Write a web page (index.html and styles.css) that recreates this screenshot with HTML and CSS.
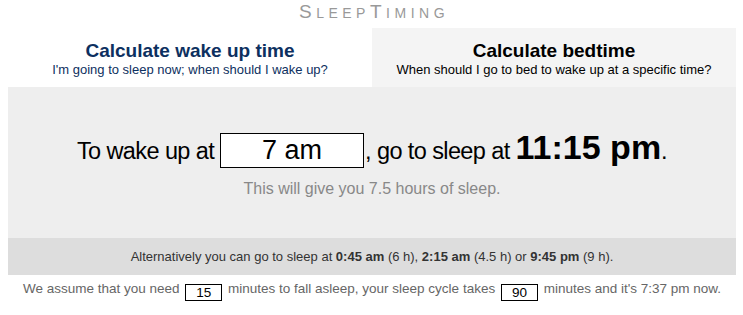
FILE: index.html
```
<!DOCTYPE html>
<html>
<head>
<meta charset="utf-8">
<link rel="stylesheet" href="styles.css">
</head>
<body>
<div class="page">
  <h1 class="logo"><span class="big">S</span>LEEP<span class="big">T</span>IMING</h1>
  <div class="tabs">
    <div class="tab active">
      <div class="tab-title">Calculate wake up time</div>
      <div class="tab-sub">I'm going to sleep now; when should I wake up?</div>
    </div>
    <div class="tab">
      <div class="tab-title">Calculate bedtime</div>
      <div class="tab-sub">When should I go to bed to wake up at a specific time?</div>
    </div>
  </div>
  <div class="panel">
    <div class="sentence">To wake up at <span class="time-input">7 am</span>, go to sleep at <span class="result">11:15 pm</span>.</div>
    <div class="note">This will give you 7.5 hours of sleep.</div>
  </div>
  <div class="alt">Alternatively you can go to sleep at <b>0:45 am</b> (6 h), <b>2:15 am</b> (4.5 h) or <b>9:45 pm</b> (9 h).</div>
  <div class="assume">We assume that you need <span class="small-input">15</span> minutes to fall asleep, your sleep cycle takes <span class="small-input">90</span> minutes and it's 7:37 pm now.</div>
</div>
</body>
</html>
```
FILE: styles.css
```
html, body { margin: 0; padding: 0; background: #fff; }
body { padding: 0 8px; font-family: "Liberation Sans", Arial, sans-serif; color: #000; }
.page { width: 728px; }
.logo {
  margin: 0;
  height: 28px;
  padding-top: 2px;
  padding-left: 4px;
  box-sizing: border-box;
  text-align: center;
  font-weight: normal;
  font-size: 14px;
  letter-spacing: 4.5px;
  color: #999;
  line-height: 20px;
}
.logo .big { font-size: 19px; }
.tabs { display: flex; height: 59px; }
.tab { flex: 1; text-align: center; background: #f4f4f4; padding-top: 11px; box-sizing: border-box; }
.tab.active { background: #fff; }
.tab-title { font-size: 19px; font-weight: bold; line-height: 23px; }
.tab-sub { font-size: 13px; line-height: 15px; }
.tab.active .tab-title, .tab.active .tab-sub { color: #0d3060; }
.panel { background: #eee; height: 151px; box-sizing: border-box; padding-top: 45px; text-align: center; }
.sentence { font-size: 23.5px; letter-spacing: -0.6px; line-height: 30px; }
.time-input {
  display: inline-block;
  width: 144px;
  height: 35px;
  box-sizing: border-box;
  padding-top: 1px;
  border: 1px solid #000;
  background: #fff;
  font-size: 27px;
  letter-spacing: 0;
  line-height: 31px;
  text-align: center;
  margin: 0 1px 0 0;
}
.result { font-size: 34px; font-weight: bold; letter-spacing: 0; }
.note { font-size: 16px; color: #888; margin-top: 12px; }
.alt { background: #ddd; height: 37px; line-height: 37px; text-align: center; font-size: 13px; color: #333; }
.assume { text-align: center; font-size: 13.5px; color: #666; padding-top: 4px; line-height: 20px; }
.small-input {
  display: inline-block;
  width: 37px;
  height: 17px;
  box-sizing: border-box;
  border: 1px solid #000;
  background: #fff;
  color: #000;
  text-align: center;
  line-height: 15px;
  vertical-align: -4px;
  margin: 0 2px;
}
```
